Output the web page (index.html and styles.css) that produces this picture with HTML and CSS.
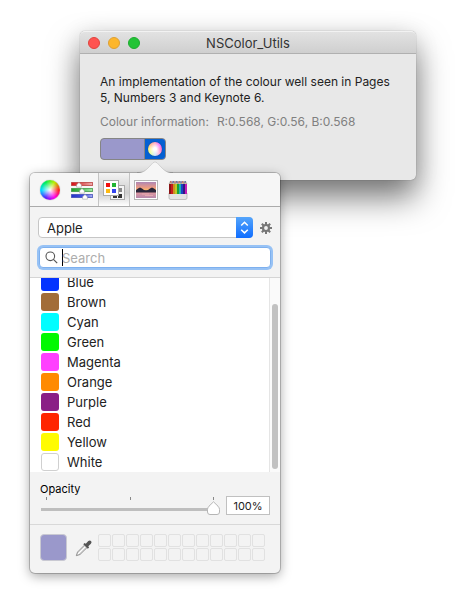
FILE: index.html
```html
<!DOCTYPE html>
<html lang="en">
<head>
<meta charset="utf-8">
<meta name="viewport" content="width=device-width, initial-scale=1">
<title>NSColor_Utils</title>
<link rel="stylesheet" href="styles.css">
</head>
<body>
<main class="window">
  <header class="titlebar">
    <div class="lights">
      <button class="light close" aria-label="Close"></button>
      <button class="light minimise" aria-label="Minimise"></button>
      <button class="light zoom" aria-label="Zoom"></button>
    </div>
    <h1 class="title">NSColor_Utils</h1>
  </header>
  <div class="content">
    <p class="intro">An implementation of the colour well seen in Pages 5, Numbers 3 and Keynote 6.</p>
    <p class="info"><span>Colour information:</span><span>R:0.568, G:0.56, B:0.568</span></p>
    <div class="well">
      <button class="well-colour" aria-label="Current colour"></button>
      <button class="well-picker" aria-label="Show colours"><span class="wheel small"></span></button>

      <section class="popover" aria-label="Colours">
        <svg class="arrow" width="36" height="13" viewBox="0 0 36 13" aria-hidden="true">
          <path d="M0 12C6 12 8 10 11 7L16 1.800Q18 0 20 1.800L25 7C28 10 30 12 36 12V13H0Z" fill="#f6f6f6"/>
          <path d="M0 11.500C6 11.500 8 10 11 7L16 1.800Q18 0 20 1.800L25 7C28 10 30 11.500 36 11.500" fill="none" stroke="#000" stroke-opacity=".12"/>
        </svg>
        <nav class="tabs">
          <button class="tab" aria-label="Colour wheel"><span class="wheel"></span></button>
          <button class="tab" aria-label="Colour sliders">
            <svg width="22" height="20" viewBox="0 0 22 20">
              <defs>
                <linearGradient id="r"><stop offset="0" stop-color="#d80d12"/><stop offset=".4" stop-color="#d94a4a"/><stop offset="1" stop-color="#eeb0b0"/></linearGradient>
                <linearGradient id="g"><stop offset="0" stop-color="#1f9a2c"/><stop offset=".5" stop-color="#4cc158"/><stop offset="1" stop-color="#a9e6ac"/></linearGradient>
                <linearGradient id="b"><stop offset="0" stop-color="#2432c8"/><stop offset=".6" stop-color="#4356e0"/><stop offset="1" stop-color="#a9b2f2"/></linearGradient>
              </defs>
              <rect x=".5" y="2.500" width="21" height="3" fill="url(#r)" stroke="#b32d2d" stroke-opacity=".7"/>
              <rect x=".5" y="8.500" width="21" height="3" fill="url(#g)" stroke="#2f9338" stroke-opacity=".7"/>
              <rect x=".5" y="14.500" width="21" height="3" fill="url(#b)" stroke="#3540b0" stroke-opacity=".7"/>
              <g fill="#fff" stroke="#999" stroke-width=".5">
                <path d="M8 2.500l2.400 2.300v2.400H5.600V4.800z"/><path d="M11 8.500l2.400 2.300v2.400H8.600v-2.400z"/><path d="M14 14.500l2.400 2.300v2.400h-4.800v-2.400z"/>
              </g>
            </svg>
          </button>
          <button class="tab selected" aria-label="Colour palettes">
            <svg width="24" height="22" viewBox="0 0 24 22">
              <rect x="8.500" y="6.500" width="14" height="14" fill="#f4f4f4" stroke="#aaa"/>
              <path d="M16 9h4v4h-4z" fill="#888"/><path d="M11 15h4v4h-4zM16 15h4v4h-4z" fill="#333"/>
              <rect x="1.500" y="1.500" width="15" height="15" fill="#fff" stroke="#aaa"/>
              <path d="M4 4h4v4H4z" fill="#f01010"/><path d="M10 4h4v4h-4z" fill="#21b534"/>
              <path d="M4 10h4v4H4z" fill="#fdb913"/><path d="M10 10h4v4h-4z" fill="#3344ef"/>
            </svg>
          </button>
          <button class="tab" aria-label="Image palettes">
            <svg width="24" height="20" viewBox="0 0 24 20">
              <defs>
                <linearGradient id="sky" x2="0" y2="1"><stop offset="0" stop-color="#ae86b4"/><stop offset=".6" stop-color="#ea9a86"/><stop offset="1" stop-color="#ffc35f"/></linearGradient>
                <linearGradient id="sea" x2="0" y2="1"><stop offset="0" stop-color="#e59aa0"/><stop offset="1" stop-color="#b688ac"/></linearGradient>
              </defs>
              <rect x=".5" y=".5" width="23" height="19" fill="#fff" stroke="#b5b5b5"/>
              <path d="M2 2h20v9H2z" fill="url(#sky)"/><path d="M2 12h20v6H2z" fill="url(#sea)"/>
              <path d="M2 10l2-1.500 2-1 2 1 2 1.500 2 .3 2-.3 2-1.500 2-1 2 1 2 1.500v2.500H2z" fill="#29253a"/>
              <path d="M8 14h7M11 15.500h8" stroke="#f1b5b5" stroke-width=".7"/>
            </svg>
          </button>
          <button class="tab" aria-label="Pencils">
            <svg width="20" height="20" viewBox="0 0 20 20">
              <path d="M1 13h18v5q0 1.500-2 1.500H3Q1 19.500 1 18z" fill="#e3e3e3" stroke="#aaa" stroke-width=".7"/>
              <path d="M1 4l1.500-3L4 4l1.500-3L7 4l1.500-3L10 4l1.500-3L13 4l1.500-3L16 4l1.500-3L19 4z" fill="#e8cfad" stroke="#777" stroke-width=".4"/>
              <path d="M1 4h18v10H1z" fill="#333"/>
              <g stroke-width="1.600"><path d="M2 4v10" stroke="#a20d10"/><path d="M4 4v10" stroke="#ef1919"/><path d="M6 4v10" stroke="#f4a719"/><path d="M8 4v10" stroke="#e1ef24"/><path d="M10 4v10" stroke="#17bd37"/><path d="M12 4v10" stroke="#14d5d9"/><path d="M14 4v10" stroke="#1745ed"/><path d="M16 4v10" stroke="#311298"/><path d="M18 4v10" stroke="#e619da"/></g>
              <path d="M3 3V1M7 3V1M11 3V1M15 3V1" stroke="#a33" stroke-width=".9"/><path d="M5 3V1M9 3V1M13 3V1M17 3V1" stroke="#238" stroke-width=".9"/>
            </svg>
          </button>
        </nav>

        <div class="filters">
          <div class="list-row">
            <div class="select-box">
              <select aria-label="Colour list"><option>Apple</option></select>
              <svg class="stepper" width="17" height="21" viewBox="0 0 17 21" aria-hidden="true"><path d="M5.200 8.500l3.300-3.200 3.300 3.200M5.200 12.700l3.300 3.200 3.300-3.200" fill="none" stroke="#fff" stroke-width="1.500"/></svg>
            </div>
            <button class="gear" aria-label="List options">
              <svg width="12" height="12" viewBox="-6 -6 12 12">
                <g stroke="#777" stroke-width="2"><path d="M0-6v3M0 3v3M-6 0h3M3 0h3M-4.200-4.200l2 2M2.200 2.200l2 2M-4.200 4.200l2-2M2.200-2.200l2-2"/></g>
                <circle r="3" fill="none" stroke="#777" stroke-width="2.200"/>
              </svg>
            </button>
          </div>
          <label class="search">
            <svg width="13" height="13" viewBox="0 0 13 13" aria-hidden="true"><circle cx="5.300" cy="5.300" r="4.300" fill="none" stroke="#555" stroke-width="1.100"/><path d="M8.400 8.400l3.800 3.800" stroke="#555" stroke-width="1.200"/></svg>
            <span class="caret"></span>
            <input type="text" placeholder="Search" aria-label="Search">
          </label>
        </div>

        <div class="colour-list">
          <ul class="colours">
            <li><span class="chip blue"></span>Blue</li>
            <li><span class="chip brown"></span>Brown</li>
            <li><span class="chip cyan"></span>Cyan</li>
            <li><span class="chip green"></span>Green</li>
            <li><span class="chip magenta"></span>Magenta</li>
            <li><span class="chip orange"></span>Orange</li>
            <li><span class="chip purple"></span>Purple</li>
            <li><span class="chip red"></span>Red</li>
            <li><span class="chip yellow"></span>Yellow</li>
            <li><span class="chip white"></span>White</li>
          </ul>
          <div class="scrollbar"><span class="scroll-thumb"></span></div>
        </div>

        <div class="opacity">
          <div class="opacity-main">
            <label for="opacity">Opacity</label>
            <div class="ticks"><i></i><i></i><i></i></div>
            <input id="opacity" class="slider" type="range" min="0" max="100" value="100">
          </div>
          <input class="percent" type="text" value="100%" aria-label="Opacity value">
        </div>

        <footer class="footer">
          <button class="current" aria-label="Selected colour"></button>
          <button class="dropper" aria-label="Pick colour from screen">
            <svg width="18" height="18" viewBox="0 0 18 18">
              <path d="M1.300 16.700l1.200-3.600 7.300-7.300 2.500 2.500L5 15.500z" fill="#ddd" stroke="#888" stroke-width=".9"/>
              <path d="M3 15l7-7" stroke="#fff"/>
              <path d="M8.300 5.200l1.300-1.300 1.200.8 2.500-2.600q1.500-1.300 2.700-.1t-.1 2.700l-2.600 2.500.8 1.200-1.300 1.300z" fill="#555"/>
            </svg>
          </button>
          <div class="slots">
            <i></i><i></i><i></i><i></i><i></i><i></i><i></i><i></i><i></i><i></i><i></i><i></i>
            <i></i><i></i><i></i><i></i><i></i><i></i><i></i><i></i><i></i><i></i><i></i><i></i>
          </div>
        </footer>
      </section>
    </div>
  </div>
</main>
</body>
</html>
```
FILE: styles.css
```css
* {
  box-sizing: border-box;
}

body {
  margin: 0;
  padding: 31px 56px 0 80px;
  min-height: 100vh;
  background: #fff;
  color: #222;
  font: 13px/16px Inter, "Liberation Sans", sans-serif;
}

button,
input,
select {
  margin: 0;
  padding: 0;
  border: 0;
  background: none;
  color: inherit;
  font: inherit;
}

svg {
  display: block;
}

/* Window */
.window {
  border-radius: 5px;
  background: #e8e8e8;
  box-shadow: 0 0 1px rgba(0, 0, 0, 0.5), 0 18px 32px rgba(0, 0, 0, 0.5), 0 4px 24px rgba(0, 0, 0, 0.12);
}

.titlebar {
  display: grid;
  grid-template-columns: 1fr auto 1fr;
  align-items: center;
  height: 23px;
  padding: 0 8px;
  border-top: 1px solid #f2f2f2;
  border-bottom: 1px solid #b0b0b0;
  border-radius: 5px 5px 0 0;
  background: linear-gradient(#e2e2e2, #cfcfcf);
}

.lights {
  display: flex;
  gap: 8px;
}

.light {
  width: 12px;
  height: 12px;
  border: 1px solid;
  border-radius: 50%;
}

.close {
  border-color: #e0443e;
  background: #ff5350;
}

.minimise {
  border-color: #dea034;
  background: #fdb62b;
}

.zoom {
  border-color: #1eab2f;
  background: #22c436;
}

.title {
  margin: 0;
  color: #333;
  font-size: 13px;
  font-weight: 400;
}

.content {
  padding: 20px;
  font-size: 12px;
}

.intro {
  margin: 0;
}

.info {
  display: flex;
  gap: 8px;
  margin: 8px 0;
  color: #808080;
}

.well {
  position: relative;
  display: flex;
  width: 66px;
  height: 22px;
  border: 1px solid #858585;
  border-radius: 4px;
  background: #9a98cb;
}

.well-colour {
  flex: 1;
  border-right: 1px solid #858585;
}

.well-picker {
  display: grid;
  place-items: center;
  width: 20px;
  border-radius: 0 3px 3px 0;
  background: #0560d2;
}

.wheel {
  width: 20px;
  height: 20px;
  border-radius: 50%;
  background: radial-gradient(#fff, rgba(255, 255, 255, 0) 60%), conic-gradient(from 90deg, #f22, #f0e, #52f, #0df, #0e5, #be0, #f22);
  box-shadow: 0 0 1px rgba(0, 0, 0, 0.5);
}

.wheel.small {
  width: 14px;
  height: 14px;
  background: radial-gradient(#fff 15%, rgba(255, 255, 255, 0.2) 70%), conic-gradient(#f8a, #e4f, #f3a, #f9c, #bdf, #df8, #fe4, #f96, #f8a);
}

/* Popover */
.popover {
  position: absolute;
  top: 34px;
  left: -71px;
  width: 250px;
  border-radius: 5px;
  background: #f3f3f3;
  box-shadow: 0 0 0 1px rgba(0, 0, 0, 0.2), 0 3px 12px rgba(0, 0, 0, 0.36);
  font-size: 13px;
}

.arrow {
  position: absolute;
  top: -12px;
  left: 107px;
}

.tabs {
  display: flex;
  height: 34px;
  padding-left: 4px;
  border-bottom: 1px solid #ababab;
  border-radius: 5px 5px 0 0;
  background: #f6f6f6;
}

.tab {
  display: grid;
  place-items: center;
  width: 32px;
}

.tab.selected {
  border: solid #c4c4c4;
  border-width: 0 1px;
  background: linear-gradient(#f3f3f3, #cfcfcf 60%, #fff);
}

.filters {
  display: grid;
  gap: 9px;
  padding: 10px 8px 9px;
  border-bottom: 1px solid #d5d5d5;
}

.list-row {
  display: flex;
  align-items: center;
  gap: 7px;
}

.select-box {
  position: relative;
  flex: 1;
}

.select-box select {
  display: block;
  width: 100%;
  height: 21px;
  padding: 0 24px 0 8px;
  border: 1px solid #c6c6c6;
  border-radius: 4px;
  background: #fff;
  appearance: none;
}

.stepper {
  position: absolute;
  top: 0;
  right: 0;
  border-radius: 0 4px 4px 0;
  background: linear-gradient(#55a5fb, #0f6dff);
  pointer-events: none;
}

.search {
  display: flex;
  align-items: center;
  height: 21px;
  margin: 0 1px;
  padding-left: 5px;
  border: 1px solid #7eb0ee;
  border-radius: 4px;
  background: #fff;
  box-shadow: 0 0 0 2px #97c2f5;
}

.search input {
  flex: 1;
  min-width: 0;
  margin-left: -1px;
  outline: 0;
}

.search input::placeholder {
  color: #adadad;
  opacity: 1;
}

.caret {
  width: 1px;
  height: 17px;
  margin-left: 4px;
  background: #000;
}

/* The list is scrolled to its last row */
.colour-list {
  display: flex;
  height: 194px;
  overflow: hidden;
  background: #fff;
}

.colours {
  display: flex;
  flex: 1;
  flex-direction: column;
  justify-content: flex-end;
  margin: 0;
  padding: 0 0 0 11px;
  list-style: none;
}

.colours li {
  display: flex;
  flex: none;
  align-items: center;
  gap: 8px;
  height: 20px;
}

.chip {
  width: 18px;
  height: 18px;
  border-radius: 3px;
}

.blue { background: #0433ff; }
.brown { background: #a26d38; }
.cyan { background: #00fdff; }
.green { background: #00f900; }
.magenta { background: #ff40ff; }
.orange { background: #ff8a00; }
.purple { background: #8a1f86; }
.red { background: #ff2600; }
.yellow { background: #fffb00; }
.white { border: 1px solid #d0d0d0; background: #fff; }

.scrollbar {
  display: flex;
  width: 11px;
  padding: 26px 2px 3px;
  border-left: 1px solid #e5e5e5;
  background: #fafafa;
}

.scroll-thumb {
  flex: 1;
  border-radius: 3px;
  background: #c1c1c1;
}

.opacity {
  display: flex;
  align-items: flex-end;
  gap: 6px;
  padding: 9px 10px;
  border-bottom: 1px solid #d8d8d8;
}

.opacity-main {
  display: grid;
  flex: 1;
  color: #000;
  font-size: 11px;
}

.ticks {
  display: flex;
  justify-content: space-between;
  height: 4px;
  padding: 0 6px;
}

.ticks i {
  width: 1px;
  height: 3px;
  background: #888;
}

.slider {
  width: 100%;
  height: 14px;
  appearance: none;
}

.slider::-webkit-slider-runnable-track {
  height: 14px;
  background: linear-gradient(#bebebe, #bebebe) 1px 7px / calc(100% - 8px) 3px no-repeat;
}

.slider::-webkit-slider-thumb {
  width: 13px;
  height: 14px;
  appearance: none;
  background: url("data:image/svg+xml,%3Csvg xmlns='http://www.w3.org/2000/svg' width='13' height='14'%3E%3Cpath d='M6.500 .8L11 5.200Q12.500 6.800 12.500 8.500V11Q12.500 13.500 10 13.500H3Q.5 13.500 .5 11V8.500Q.5 6.800 2 5.200Z' fill='white' stroke='%23b5b5b5'/%3E%3C/svg%3E");
}

.percent {
  width: 44px;
  height: 19px;
  border: 1px solid #c0c0c0;
  background: #fff;
  font-size: 11px;
  text-align: center;
}

.footer {
  display: flex;
  align-items: center;
  padding: 9px 10px 12px;
}

.current {
  width: 27px;
  height: 27px;
  border: 1px solid #c9c9d2;
  border-radius: 4px;
  background: #9a98cb;
}

.dropper {
  margin: 0 5px 0 8px;
}

.slots {
  display: grid;
  grid-template-columns: repeat(12, 13px);
  gap: 1px;
}

.slots i {
  height: 13px;
  border: 1px solid #e1e1e1;
  border-radius: 2px;
}
```
